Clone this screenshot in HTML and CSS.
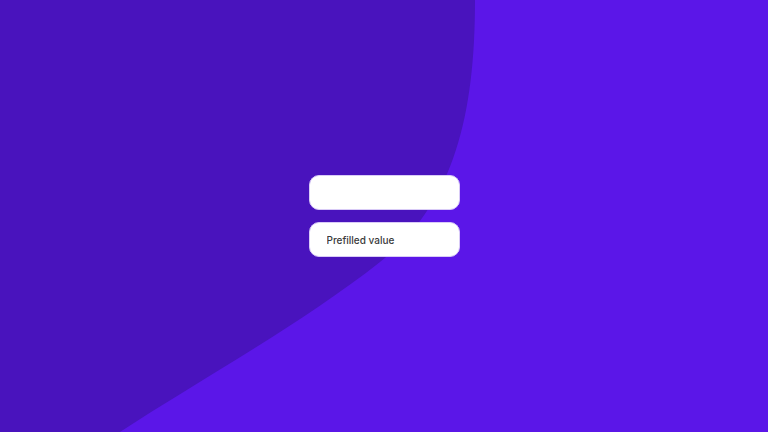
FILE: index.html
```
<!DOCTYPE html>
<html lang="en">
<head>
<meta charset="utf-8">
<link rel="stylesheet" href="styles.css">
</head>
<body>
<div class="stage">
  <svg class="blob" viewBox="0 0 768 432" preserveAspectRatio="none" aria-hidden="true">
    <path d="M0 0 H475 C475 120 452 205 380 262 C300 325 200 380 120 432 H0 Z" fill="#4913bd"/>
  </svg>
  <form class="form">
    <input class="field" type="text" value="">
    <input class="field" type="text" value="Prefilled value">
  </form>
</div>
</body>
</html>
```
FILE: styles.css
```
html, body {
  margin: 0;
  padding: 0;
  width: 768px;
  height: 432px;
  overflow: hidden;
}
body {
  font-family: Inter, "Noto Sans", sans-serif;
  background: #5b16e8;
}
.stage {
  position: relative;
  width: 768px;
  height: 432px;
  display: flex;
  align-items: center;
  justify-content: center;
}
.blob {
  position: absolute;
  left: 0;
  top: 0;
  width: 768px;
  height: 432px;
}
.form {
  position: relative;
  display: flex;
  flex-direction: column;
  gap: 12px;
  margin: 0;
}
.field {
  box-sizing: border-box;
  width: 151px;
  height: 35px;
  border: 1px solid #d9cbf7;
  border-radius: 10px;
  background: #fff;
  padding: 1px 0 0 17px;
  font-family: Inter, "Noto Sans", sans-serif;
  font-size: 10px;
  font-weight: 500;
  color: #3a3a3a;
  outline: none;
}
```
